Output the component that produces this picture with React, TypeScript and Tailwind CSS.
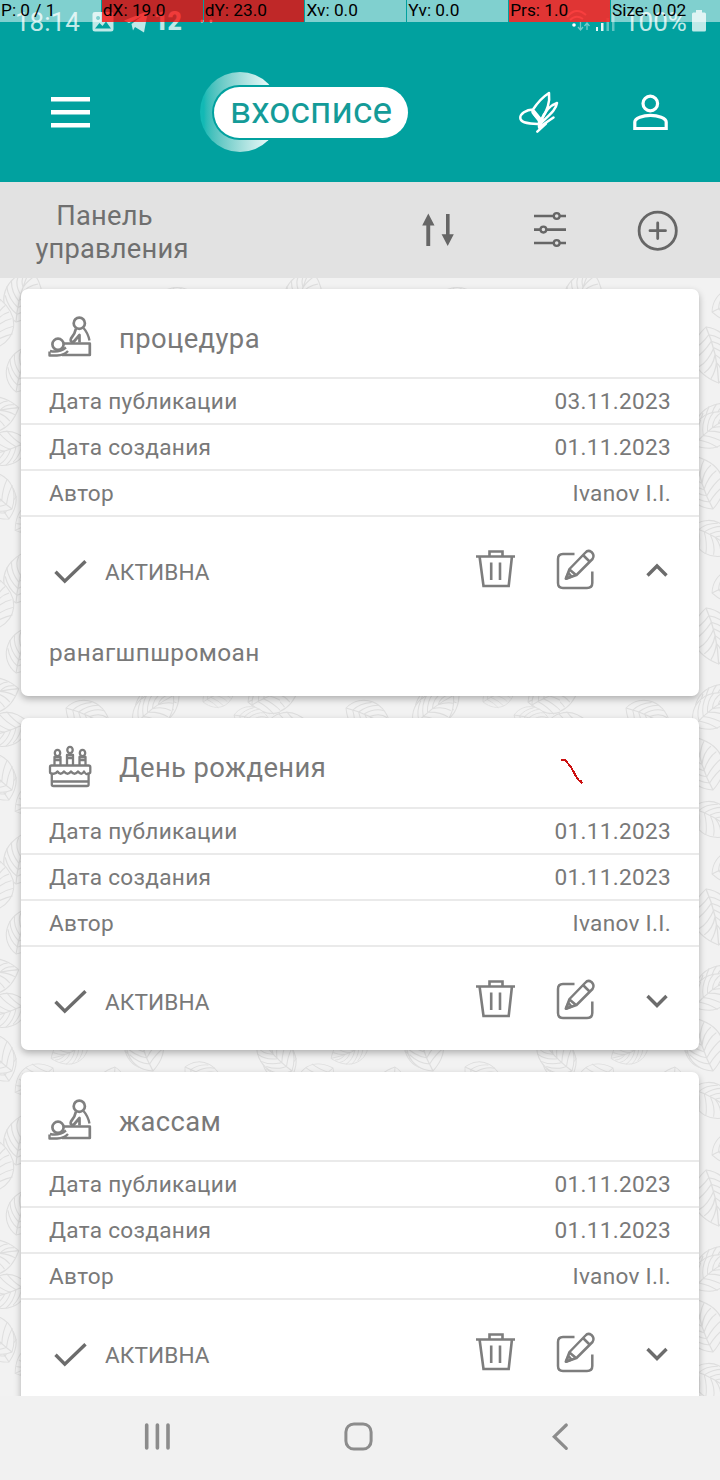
import React from "react";

const ROBOTO = "font-['Roboto','Noto_Sans',sans-serif]";

const LEAVES: [number, number, number, number][] = [
  [16, 322, -72, 1.1],
  [16, 41, -72, 1.1],
  [16, 111, -68, 1],
  [-32, 140, -12, 1.05],
  [248, 140, -12, 1.05],
  [28, 160, 165, 1],
  [308, 160, 165, 1],
  [9, 238, -112, 1],
  [289, 238, -112, 1],
  [53, 225, 150, 0.9],
  [-6, 68, -80, 1],
  [274, 68, -80, 1],
  [66, 146, 28, 1],
  [137, 160, -38, 1.1],
  [203, 140, -20, 0.7],
  [252, 143, -18, 1],
  [88, 200, 160, 0.8],
  [153, 226, -115, 1],
  [292, 228, -130, 1],
  [12, 228, -130, 1],
  [115, 224, 105, 0.9],
  [185, 224, 35, 0.9],
  [234, 153, 20, 0.8],
  [132, 246, 32, 1],
  [152, 31, -15, 1],
  [146, 46, 80, 1.15],
  [134, 164, -35, 1],
  [153, 228, -105, 1.1],
];

function Leaves() {
  return (
    <svg className="absolute inset-0 h-full w-full" aria-hidden="true">
      <defs>
        <pattern id="leaves" width="280" height="281" patternUnits="userSpaceOnUse">
          <g fill="none" stroke="#dedede" strokeWidth="0.9">
            {LEAVES.map(([x, y, r, s], i) => (
              <g key={i} transform={`translate(${x} ${y}) rotate(${r}) scale(${s} ${s * 1.2})`}>
                <path
                  fill="#f2f2f2"
                  d="M0 0C6-17 32-22 50-2C36 17 14 18 0 0Z"
                />
                <path d="M0 0Q24-5 50-2M7-1Q10-9 20-14M13-2Q18-11 28-15M19-3Q25-11 35-13M25-3Q32-10 41-9M32-3Q38-7 46-5M7-1Q14 5 18 13M13-2Q22 5 26 13M19-3Q30 3 33 10M25-3Q35 0 39 7M32-3Q40-1 45 3" />
              </g>
            ))}
          </g>
        </pattern>
      </defs>
      <rect width="100%" height="100%" fill="url(#leaves)" />
    </svg>
  );
}

function PointerCell({ text, tone }: { text: string; tone: string }) {
  return (
    <div className={`h-[22px] flex-1 pl-[1px] text-[17.3px] leading-[21px] whitespace-nowrap text-black ${tone}`}>
      {text}
    </div>
  );
}

function PointerBar() {
  const light = "bg-white/50";
  const red = "bg-[rgba(255,0,0,0.75)]";
  return (
    <div className="absolute top-0 left-0 z-10 flex w-[720px] gap-px">
      <PointerCell text="P: 0 / 1" tone={light} />
      <PointerCell text="dX: 19.0" tone={red} />
      <PointerCell text="dY: 23.0" tone={red} />
      <PointerCell text="Xv: 0.0" tone={light} />
      <PointerCell text="Yv: 0.0" tone={light} />
      <PointerCell text="Prs: 1.0" tone="bg-[rgba(255,37,37,0.88)]" />
      <div className="h-[22px] w-[109px] bg-white/50 pl-[1px] text-[17.3px] leading-[21px] whitespace-nowrap text-black">
        Size: 0.02
      </div>
    </div>
  );
}

function StatusBar() {
  return (
    <div className="flex h-[42px] items-start pt-[7px] pr-[14px] pl-[15px] text-[#c0e9e8]">
      <span className="w-[77px] text-[26px] leading-[30px]">18:14</span>
      <svg className="mt-[4px] h-[21px] w-[22px]" viewBox="0 0 22 21" fill="currentColor">
        <path
          fillRule="evenodd"
          d="M3 1H19Q21.500 1 21.500 3V18Q21.500 20.500 19 20.500H3Q.5 20.500.5 18V3Q.5 1 3 1ZM3 17.500H19L14 10.500L10.500 15L7.500 12ZM6 5A2 2 0 1 0 6.100 5Z"
        />
      </svg>
      <svg className="mt-[4px] ml-[10px] h-[22px] w-[24px]" viewBox="0 0 24 22" fill="currentColor">
        <path d="M0 9.500L24 0L20 21.500L11 16L9 19.500L7.500 13L18 5L5 12Z" />
      </svg>
      <span className="ml-[6px] w-[46px] text-[25px] leading-[30px] font-black tracking-[-1px]">12</span>
      <svg className="mt-[12px] h-[4px] w-[14px]" viewBox="0 0 14 4" fill="#ffffff">
        <circle cx="2" cy="2" r="1.500" />
        <circle cx="11" cy="2" r="1.500" />
      </svg>
      <svg className="mt-[2px] ml-auto h-[24px] w-[24px]" viewBox="566 9 24 24" fill="none" stroke="currentColor">
        <path d="M567 17Q576 6 586 15M570 20Q576 14 583 19" strokeWidth="2" />
        <circle cx="574" cy="25" r="1.800" fill="#ffffff" stroke="none" />
        <path d="M580.500 22V29M578 27L580.500 30L583 27M587 30V23M584.500 26L587 23L589.500 26" strokeWidth="1.300" opacity=".6" />
      </svg>
      <svg className="mt-[2px] ml-[5px] h-[24px] w-[20px]" viewBox="595 9 20 24" fill="currentColor">
        <path d="M596 27h2v4h-2zM601 23h2.500v8h-2.500z" fill="#e7f7f7" />
        <path d="M606.500 18h2.500v13h-2.500zM612 13h2.500v18h-2.500z" opacity=".5" />
      </svg>
      <span className="ml-[9px] w-[64px] text-[26px] leading-[30px]">100%</span>
      <svg className="mt-[3px] ml-[4px] h-[22px] w-[14px]" viewBox="0 0 14 22" fill="currentColor">
        <path d="M4 0h6v2.500h2.500q1.500 0 1.500 1.500v16q0 1.500-1.500 1.500h-11q-1.500 0-1.500-1.500v-16q0-1.500 1.500-1.500h2.500z" />
      </svg>
    </div>
  );
}

function Logo() {
  return (
    <div className="relative ml-[110px] h-[80px] w-[210px]">
      <div className="absolute top-0 left-0 h-[80px] w-[80px] rounded-full bg-linear-to-r from-[#12b9b5] from-5% to-[#e6f8f8] to-85%" />
      <div className="absolute top-[12.5px] left-[12px] flex h-[55px] w-[198px] rounded-full bg-[#01a19f] p-[2px]">
        <div className="flex w-full rounded-full bg-white">
          <span className="ml-[16px] text-[37px] leading-[47px] tracking-[0.1px] text-[#149b98]">вхосписе</span>
        </div>
      </div>
    </div>
  );
}

function AppHeader() {
  return (
    <header className="flex h-[182px] flex-col bg-[#01a19f]">
      <StatusBar />
      <div className="mt-[30px] flex h-[80px] items-center">
        <svg className="ml-[51px] h-[32px] w-[39px]" viewBox="0 0 39 32" fill="#ffffff">
          <path d="M0 1h39v4.500h-39zM0 14h39v4.500h-39zM0 27h39v4.500h-39z" />
        </svg>
        <Logo />
        <svg
          className="ml-[106px] h-[44px] w-[44px]"
          viewBox="516 90 44 44"
          fill="none"
          stroke="#ffffff"
          strokeWidth="2.500"
          strokeLinejoin="round"
          strokeLinecap="round"
        >
          <path d="M533 109.500C526 109.500 520 114 520.300 118C520.500 122 528 124 537.500 124M533 109.500C531.500 114 537 116 540 122C541 120 551 108 549 93C541 98 536 105 533 109.500Z" />
          <path d="M541 121C545 110 551 105 557 103C556 110 549 115 541 123" />
          <path d="M553.500 117.500L541 126M546 123.500L537.300 131.700" />
          <path d="M533.500 112L540 120L540 127" strokeWidth="4.500" />
        </svg>
        <svg
          className="ml-[70px] h-[44px] w-[40px]"
          viewBox="630 90 40 44"
          fill="none"
          stroke="#ffffff"
          strokeWidth="3.200"
        >
          <circle cx="650.300" cy="103.500" r="7.300" />
          <path d="M634.800 128.500H666.200V122C666.200 118 658 115.300 650.500 115.300S634.800 118 634.800 122Z" />
        </svg>
      </div>
    </header>
  );
}

function Toolbar() {
  return (
    <div className="relative flex h-[96px] items-center bg-[#e2e2e2] text-[#666666]">
      <h1 className="w-[224px] pt-[6px] text-center text-[27.3px] leading-[33px] tracking-[0.2px] text-[#6f6f6f]">
        <span className="block pr-[15px]">Панель</span>
        <span className="block">управления</span>
      </h1>
      <svg className="ml-[194px] h-[40px] w-[40px]" viewBox="418 210 40 40" fill="currentColor">
        <path d="M428.300 213.500L434.500 225.500H430.200V246H426.300V225.500H422.200ZM446 214H449.600V234.300H453.800L447.700 246L441.600 234.300H446Z" />
      </svg>
      <svg className="ml-[72px] h-[40px] w-[40px]" viewBox="530 210 40 40" stroke="currentColor" strokeWidth="2.600">
        <path d="M534 216H566M534 229.600H566M534 243H566" />
        <g fill="#e2e2e2" strokeWidth="2.300">
          <circle cx="556.700" cy="216" r="2.900" />
          <circle cx="543.400" cy="229.600" r="2.900" />
          <circle cx="556.700" cy="243" r="2.900" />
        </g>
      </svg>
      <svg
        className="ml-[66px] h-[44px] w-[44px]"
        viewBox="636 208 44 44"
        fill="none"
        stroke="currentColor"
        strokeWidth="2.800"
        strokeLinecap="round"
      >
        <circle cx="657.700" cy="230.700" r="18.600" />
        <path d="M650 230.700H665.500M657.700 223V238.500" />
      </svg>
    </div>
  );
}

function MassageIcon() {
  return (
    <svg className="h-[44px] w-[44px]" viewBox="48 315 44 44" fill="none" stroke="#808080" strokeWidth="2.700" strokeLinejoin="round">
      <circle cx="79.300" cy="323.200" r="5.600" />
      <path d="M76 328.500Q75 334 71 338.500Q69.500 342 73.500 342L79.500 335V342.500" />
      <path d="M83.500 328Q88 333 89.500 340.500" strokeWidth="2.300" />
      <circle cx="58" cy="344.300" r="5.600" />
      <path d="M64 343.500H89.800V355H62" />
      <path d="M50 351Q59 353 66 347.500M49.500 351.500V355.500H57Q64 355.500 68 351" strokeWidth="2.400" />
    </svg>
  );
}

function CakeIcon() {
  return (
    <svg className="h-[44px] w-[44px]" viewBox="48 745 44 44" fill="none" stroke="#7d7d7d" strokeWidth="2.300" strokeLinejoin="round">
      <path d="M51.500 766.500H88.500Q90.300 766.500 90.300 768V773Q90.300 774.500 88 774.500Q86.500 776.500 84 772.500Q81.500 777 78 772.500Q74.500 777 71 772.500Q67.500 777 64 772.500Q60.500 777 57.500 772.500Q55.500 775.500 52 774.500Q50 774.500 50 773V768Q50 766.500 51.500 766.500Z" />
      <path d="M51.800 775V785.500Q51.800 787 53.500 787H87Q88.600 787 88.600 785.500V775M52 782.500H88.500" />
      {[57.500, 70, 82.500].map((x, i) => (
        <g key={x} transform={`translate(${x} ${i === 1 ? 747 : 750})`}>
          <ellipse cx="0" cy="4" rx="2.700" ry="3.200" />
          <path d={i === 1 ? "M-3 19V9H3V19M-2.500 12H2.500" : "M-3 16V8H3V16M-2.500 11H2.500"} />
        </g>
      ))}
    </svg>
  );
}

function Row({ label, value }: { label: string; value: string }) {
  return (
    <div className="flex h-[46px] items-center justify-between border-b-2 border-[#eaeaea] px-[28px] pt-[2px] text-[22.6px] leading-[42px] tracking-[0.3px]">
      <span>{label}</span>
      <span>{value}</span>
    </div>
  );
}

interface NoticeProps {
  title: string;
  icon: React.ReactNode;
  published: string;
  headHeight: string;
  height: string;
  note?: string;
  children?: React.ReactNode;
}

function NoticeCard({ title, icon, published, headHeight, height, note, children }: NoticeProps) {
  return (
    <article
      className={`relative shrink-0 rounded-[7px] bg-white text-[#797979] shadow-[0_3px_7px_rgba(0,0,0,0.28)] ${height}`}
    >
      <div className={`flex items-start border-b-2 border-[#eaeaea] pl-[27px] ${headHeight}`}>
        <div className="mt-[26px]">{icon}</div>
        <h2 className="mt-[33px] ml-[27px] text-[27.4px] leading-[34px] tracking-[0.4px]">{title}</h2>
      </div>
      <Row label="Дата публикации" value={published} />
      <Row label="Дата создания" value="01.11.2023" />
      <Row label="Автор" value="Ivanov I.I." />
      <div className="flex h-[104px] items-center pt-[4px]">
        <svg className="ml-[31px] h-[30px] w-[36px]" viewBox="52 556 36 30" fill="none" stroke="#6c6c6c" strokeWidth="3.400">
          <path d="M55.500 571.800L64.800 581.200L85.500 561.200" />
        </svg>
        <span className="ml-[17px] w-[369px] pt-[4px] text-[22.600px] leading-[30px] tracking-[0.1px]">АКТИВНА</span>
        <svg className="mb-[4px] h-[44px] w-[44px]" viewBox="474 547 44 44" fill="none" stroke="#7d7d7d" strokeWidth="2.600">
          <path d="M476 556.500H515M489.500 555.500V551.500H502.500V555.500M479.500 556L483.500 586H508.700L512 556M491.200 562.500V580M500 562.500V580" />
        </svg>
        <svg
          className="mb-[4px] ml-[36px] h-[44px] w-[44px]"
          viewBox="554 547 44 44"
          fill="none"
          stroke="#7d7d7d"
          strokeWidth="2.500"
          strokeLinejoin="round"
        >
          <path d="M574.500 554H563Q558 554 558 559V583Q558 588 563 588H587Q592.300 588 592.300 583V571.500" />
          <path d="M565.800 578.800L569.500 569L585.500 552.500Q588 549.500 591.500 552Q595 555.500 592.500 559L576.500 575L565.800 578.800M583 555L590 562M569.500 569.500L576 575" />
          <path d="M565.800 578.800L568.500 573L571.500 576.500Z" />
        </svg>
        <svg className="ml-[44px] h-[20px] w-[30px]" viewBox="-15 -10 30 20" fill="none" stroke="#6c6c6c" strokeWidth="3.400">
          <path d={note ? "M-9.500 4.500L0-5L9.500 4.500" : "M-9.500-5L0 4.500L9.500-5"} />
        </svg>
      </div>
      {note && <p className="pt-[17px] pl-[28px] text-[24.4px] leading-[30px] tracking-[0.4px]">{note}</p>}
      {children}
    </article>
  );
}

function NavBar() {
  return (
    <nav className="relative z-10 flex h-[84px] shrink-0 bg-[#f1f1f1]">
      <svg className="mt-[20px] ml-[137px] h-[40px] w-[40px]" viewBox="137 1416 40 40" stroke="#8c8c8c" strokeWidth="3.600" strokeLinecap="round">
        <path d="M146.700 1425V1448M157.400 1425V1448M168 1425V1448" />
      </svg>
      <svg className="mt-[20px] ml-[161px] h-[40px] w-[40px]" viewBox="338 1416 40 40" fill="none" stroke="#8c8c8c" strokeWidth="3">
        <rect x="345.900" y="1423.900" width="25.200" height="25.200" rx="8" />
      </svg>
      <svg
        className="mt-[20px] ml-[162px] h-[40px] w-[40px]"
        viewBox="540 1416 40 40"
        fill="none"
        stroke="#8c8c8c"
        strokeWidth="3.200"
        strokeLinecap="round"
      >
        <path d="M566.300 1425L554.300 1436.700L566.300 1448.300" />
      </svg>
    </nav>
  );
}

export default function App() {
  return (
    <div className={`relative flex h-[1480px] w-[720px] flex-col overflow-hidden bg-[#f2f2f2] ${ROBOTO}`}>
      <Leaves />
      <PointerBar />
      <div className="relative">
        <AppHeader />
        <Toolbar />
      </div>
      <main className="relative flex min-h-0 flex-1 flex-col gap-[22px] overflow-hidden px-[21px] pt-[11px]">
        <NoticeCard
          title="процедура"
          icon={<MassageIcon />}
          published="03.11.2023"
          headHeight="h-[90px]"
          height="h-[407px]"
          note="ранагшпшромоан"
        />
        <NoticeCard
          title="День рождения"
          icon={<CakeIcon />}
          published="01.11.2023"
          headHeight="h-[91px]"
          height="h-[332px]"
        >
          <svg
            className="absolute top-[40px] left-[538px] h-[28px] w-[26px]"
            viewBox="559 758 26 28"
            fill="none"
            stroke="#cc1111"
            strokeWidth="2"
            shapeRendering="crispEdges"
          >
            <path d="M561 760H565L571 767L577 778L579 780.500H580.500L582 783.500" />
          </svg>
        </NoticeCard>
        <NoticeCard
          title="жассам"
          icon={<MassageIcon />}
          published="01.11.2023"
          headHeight="h-[90px]"
          height="h-[340px]"
        />
      </main>
      <NavBar />
    </div>
  );
}
